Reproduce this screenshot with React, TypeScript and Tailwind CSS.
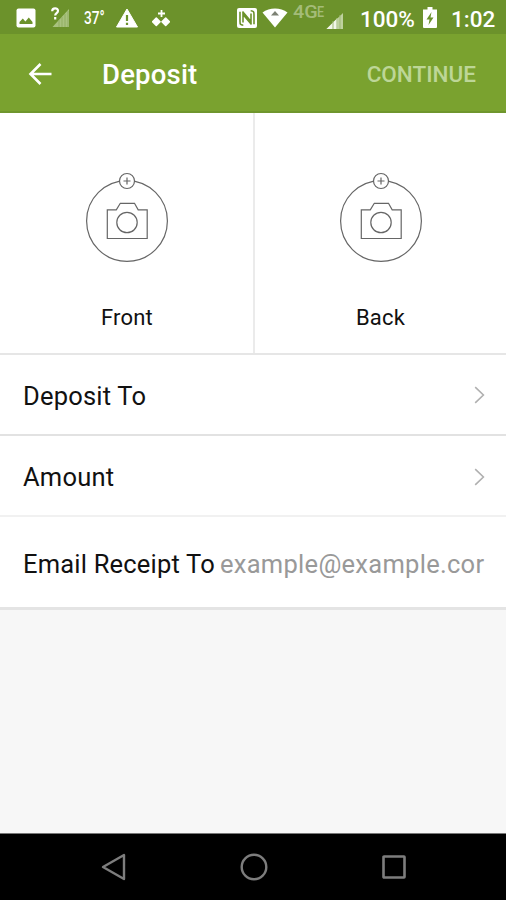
import type React from "react"

interface CaptureTileProps {
  label: string
  className?: string
}

function CaptureTile({ label, className = "" }: CaptureTileProps) {
  return (
    <button type="button" className={`flex flex-col items-center pt-[57px] ${className}`}>
      <svg width="84" height="94" viewBox="0 0 84 94" fill="none" stroke="#666" strokeWidth="1.2">
        <circle cx="42" cy="51" r="40.4" />
        <circle cx="42" cy="11" r="7.5" fill="#fff" />
        <path d="M42 7.5v7M38.5 11h7" />
        <path d="M22.3 39.8h9l4-6.5h14.2l3.7 6.5h9v28.7H22.3z" />
        <circle cx="42" cy="52.5" r="10.2" />
      </svg>
      <span className="mt-[41px] text-[22px] leading-[26px] tracking-[0.2px] text-[#111]">{label}</span>
    </button>
  )
}

function Row({ children }: { children: React.ReactNode }) {
  return (
    <button type="button" className="flex w-full flex-1 items-center justify-between pl-[23px] pr-[21px] text-left">
      <span className="mt-[3px] text-[25.5px] tracking-[0.2px]">{children}</span>
      <svg className="mt-px" width="11" height="18" viewBox="0 0 11 18" fill="none" stroke="#b0b0b0" strokeWidth="1.6">
        <path d="M1.2 1.2 9.4 9l-8.2 7.8" />
      </svg>
    </button>
  )
}

function StatusBar() {
  return (
    <div className="flex h-[34px] items-center bg-[#6c922b] text-white">
      <svg className="ml-4 mt-px shrink-0" width="20" height="20" viewBox="0 0 20 20">
        <rect x=".5" y=".5" width="19" height="19" rx="2" fill="#fff" />
        <path d="M3.5 16v-2l3.3-3.5 2.6 3 3.4-4 3.7 4.5v2z" fill="#6c922b" />
      </svg>
      <svg className="ml-[15px] shrink-0" width="19" height="21" viewBox="0 0 19 21">
        <path d="M18 2v18H1.5z" fill="#a9c27f" />
        <path d="M8 13v7M11 10v10M14 7v13M17 4v16" stroke="#91ae62" strokeWidth="1" />
        <path d="M1.2 4.3c0-4 5.8-3.8 5.8-.5C7 6.2 4.2 6 4.2 8.600M4.200 10v2.400" fill="none" stroke="#fff" strokeWidth="2.2" />
      </svg>
      <span className="ml-[14px] mt-px w-[19px] origin-left scale-x-[.72] whitespace-nowrap text-[19px] font-medium leading-5">37°</span>
      <svg className="ml-[13px] mt-px shrink-0" width="22" height="20" viewBox="0 0 22 20">
        <path d="M11 1 21.5 19H.5z" fill="#fff" stroke="#fff" strokeLinejoin="round" />
        <path d="M11 7v6M11 14.7V17" stroke="#6c922b" strokeWidth="2.2" />
      </svg>
      <svg className="ml-[14px] mt-px shrink-0" width="18" height="18" viewBox="0 0 18 18">
        <path d="M9.5 1v7M6 4.5h7" stroke="#fff" strokeWidth="1.8" />
        <path d="M4.3 9 8 12.7l-3.7 3.7L.6 12.7zM13.7 9l3.7 3.7-3.7 3.7-3.7-3.7z" fill="#fff" stroke="#fff" strokeWidth="1.6" strokeLinejoin="round" />
      </svg>
      <svg className="ml-[67px] mt-px shrink-0" width="20" height="20" viewBox="0 0 20 20">
        <rect width="20" height="20" rx="2" fill="#fff" />
        <path d="M6.300 17.200c-3-.2-3.300-.8-3.300-4V3.800M5.500 3.500 14 13.500V5.500M13.700 2.800c3 .2 3.300.8 3.300 4v9.400M14.500 16.500 6 6.500v8" fill="none" stroke="#6c922b" strokeWidth="1.6" />
      </svg>
      <svg className="ml-[5px] mt-px shrink-0" width="26" height="20" viewBox="0 0 26 20">
        <path d="M.5 4.5C7.5-.7 18.5-.7 25.5 4.5L13 19.5z" fill="#fff" />
        <path d="m13 3 4 4.500H9z" fill="#7c8174" />
      </svg>
      <span className="ml-[5px] -mt-[10px] flex h-[18px] w-[32px] shrink-0 items-center text-[#a4bc78]">
        <span className="w-[24px] origin-left scale-x-[1.1] text-[18px] leading-[18px] font-medium">4G</span>
        <span className="origin-left scale-x-90 text-[14px] leading-[18px] font-medium">E</span>
      </span>
      <svg className="ml-px mt-[7px] shrink-0" width="18" height="16" viewBox="0 0 18 16">
        <path d="M17 0v16H.5z" fill="#bfd19e" />
        <path d="M11.5 5v11H.5z" fill="#f2f6e8" />
        <path d="M7 8v8M11 5v11M14 2v14" stroke="#9eb976" />
      </svg>
      <span className="ml-[16px] mt-[3px] w-[54px] text-[22.5px] font-medium leading-6">100%</span>
      <svg className="ml-[9px] shrink-0" width="14" height="21" viewBox="0 0 14 21">
        <path d="M4.5 0h5v2.5H14V20a1 1 0 0 1-1 1H1a1 1 0 0 1-1-1V2.5h4.5z" fill="#fff" />
        <path d="m8.5 5-5 7.5h3l-1 5.5 5-7.5h-3z" fill="#6c922b" />
      </svg>
      <span className="ml-[14px] mt-[4px] text-[22.5px] font-medium leading-6">1:02</span>
    </div>
  )
}

export default function App() {
  return (
    <div className="flex h-[900px] w-[506px] flex-col overflow-hidden bg-[#f7f7f7] font-['Roboto',sans-serif] text-[#111]">
      <StatusBar />

      <header className="flex h-[79px] items-center border-b-2 border-[#6f962d] bg-[#7aa22f] pl-[28px] pr-[30px]">
        <svg className="mt-[2px]" width="25" height="24" viewBox="0 0 25 24" fill="none" stroke="#fff" strokeWidth="2.6">
          <path d="M23.5 12h-21M12.5 2l-10 10 10 10" />
        </svg>
        <h1 className="ml-[49px] mt-[5px] text-[27.5px] font-medium tracking-[0.2px] text-white">Deposit</h1>
        <button type="button" disabled className="ml-auto mt-[5px] text-[22.5px] font-medium text-[#bdd697]">
          CONTINUE
        </button>
      </header>

      <main className="bg-white">
        <section className="flex h-[242px] border-b-2 border-[#e6e6e6]">
          <CaptureTile label="Front" className="w-[255px] border-r-2 border-[#ebebeb] pl-px" />
          <CaptureTile label="Back" className="flex-1 pr-px pl-px" />
        </section>
        <div className="flex h-[81px] border-b-2 border-[#e2e2e2]">
          <Row>Deposit To</Row>
        </div>
        <div className="flex h-[81px] border-b-2 border-[#f1f1f1] pt-px">
          <Row>Amount</Row>
        </div>
        <div className="flex h-[93px] items-center border-b-3 border-[#e4e4e4] pl-[23px] pt-[4px] text-[25.5px] tracking-[0.2px]">
          <span className="whitespace-nowrap">Email Receipt To</span>
          <span className="ml-[5px] whitespace-nowrap tracking-[0.28px] text-[#999]">example@example.cor</span>
        </div>
      </main>

      <nav className="mt-auto flex h-[67px] items-center border-t border-[#777] bg-black pl-[101px]">
        <svg width="25" height="28" viewBox="0 0 25 28" fill="none" stroke="#7d7d7d" strokeWidth="2.4">
          <path d="M23 2v24L2 14z" strokeLinejoin="round" />
        </svg>
        <svg className="ml-[114px]" width="28" height="28" viewBox="0 0 28 28" fill="none" stroke="#7d7d7d" strokeWidth="2.4">
          <circle cx="14" cy="14" r="12.3" />
        </svg>
        <svg className="ml-[113px]" width="26" height="26" viewBox="0 0 26 26" fill="none" stroke="#7d7d7d" strokeWidth="2.6">
          <rect x="2.5" y="2.5" width="21" height="21" rx=".5" />
        </svg>
      </nav>
    </div>
  )
}
